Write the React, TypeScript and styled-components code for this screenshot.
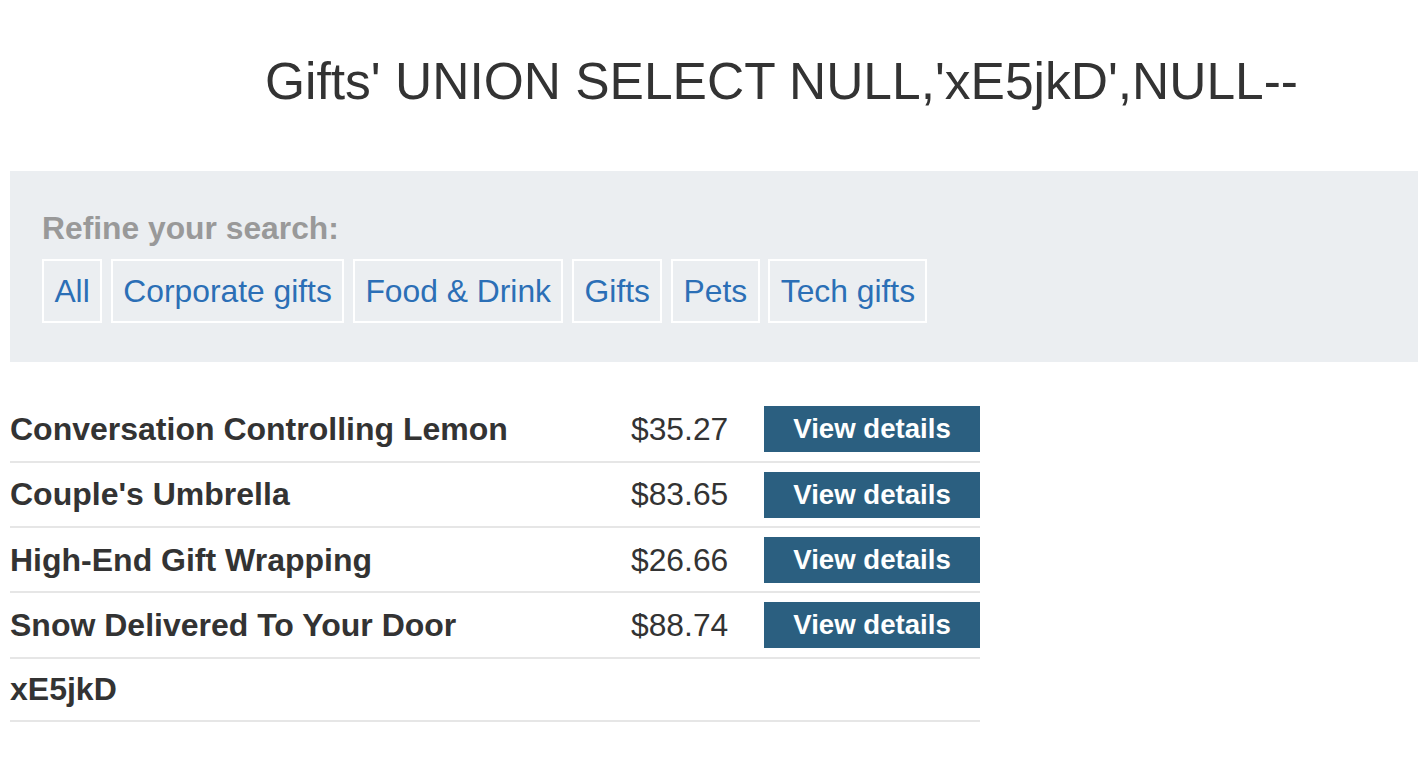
import styled, { createGlobalStyle } from 'styled-components';

const GlobalStyle = createGlobalStyle`
  body {
    margin: 0;
    background: #fff;
    font-family: 'Liberation Sans', Arial, Helvetica, sans-serif;
    color: #333;
  }
`;

const categories = ['All', 'Corporate gifts', 'Food & Drink', 'Gifts', 'Pets', 'Tech gifts'];

type Product = { name: string; price?: string };

const products: Product[] = [
  { name: 'Conversation Controlling Lemon', price: '$35.27' },
  { name: "Couple's Umbrella", price: '$83.65' },
  { name: 'High-End Gift Wrapping', price: '$26.66' },
  { name: 'Snow Delivered To Your Door', price: '$88.74' },
  { name: 'xE5jkD' },
];

const App = () => {
  return (
    <Page>
      <GlobalStyle />
      <PageTitle>Gifts' UNION SELECT NULL,'xE5jkD',NULL--</PageTitle>
      <FilterPanel>
        <FilterLabel>Refine your search:</FilterLabel>
        <FilterList>
          {categories.map((c) => (
            <FilterLink key={c}>{c}</FilterLink>
          ))}
        </FilterList>
      </FilterPanel>
      <ProductTable>
        {products.map((p) => (
          <ProductRow key={p.name}>
            <ProductName>{p.name}</ProductName>
            <ProductPrice>{p.price}</ProductPrice>
            <div>{p.price && <DetailsButton>View details</DetailsButton>}</div>
          </ProductRow>
        ))}
      </ProductTable>
    </Page>
  );
};

const Page = styled.div`
  padding: 0 0 40px 10px;
`;

const PageTitle = styled.h1`
  margin: 52px 0 0 255px;
  font-size: 51.5px;
  line-height: 59px;
  font-weight: 400;
  color: #333;
  white-space: nowrap;
`;

const FilterPanel = styled.div`
  margin-top: 60px;
  padding: 39px 32px 39px 32px;
  background: #ebeef1;
`;

const FilterLabel = styled.div`
  font-size: 31.8px;
  line-height: 36.6px;
  font-weight: 700;
  color: #999;
`;

const FilterList = styled.div`
  display: flex;
  gap: 8.8px;
  margin-top: 12.4px;
`;

const FilterLink = styled.a`
  display: block;
  padding: 11.7px 10.4px;
  border: 2px solid #fff;
  font-size: 31.8px;
  line-height: 36.6px;
  color: #2b6fb6;
  text-decoration: none;
  cursor: pointer;
`;

const ProductTable = styled.div`
  width: 970px;
  margin-top: 35.7px;
`;

const ProductRow = styled.div`
  box-sizing: border-box;
  display: grid;
  grid-template-columns: 621px 133px 216px;
  align-items: center;
  min-height: 63px;
  padding: 8.65px 0;
  border-bottom: 2px solid #e6e6e6;
  font-size: 31.8px;
  line-height: 36.6px;
`;

const ProductName = styled.div`
  font-size: 32px;
  font-weight: 700;
  color: #333;
  white-space: nowrap;
`;

const ProductPrice = styled.div`
  color: #333;
`;

const DetailsButton = styled.button`
  display: block;
  width: 216px;
  height: 46px;
  padding: 0;
  border: none;
  background: #2b5f80;
  color: #fff;
  font-family: 'Liberation Sans', Arial, Helvetica, sans-serif;
  font-size: 27.6px;
  font-weight: 700;
  cursor: pointer;
`;

export default App;
